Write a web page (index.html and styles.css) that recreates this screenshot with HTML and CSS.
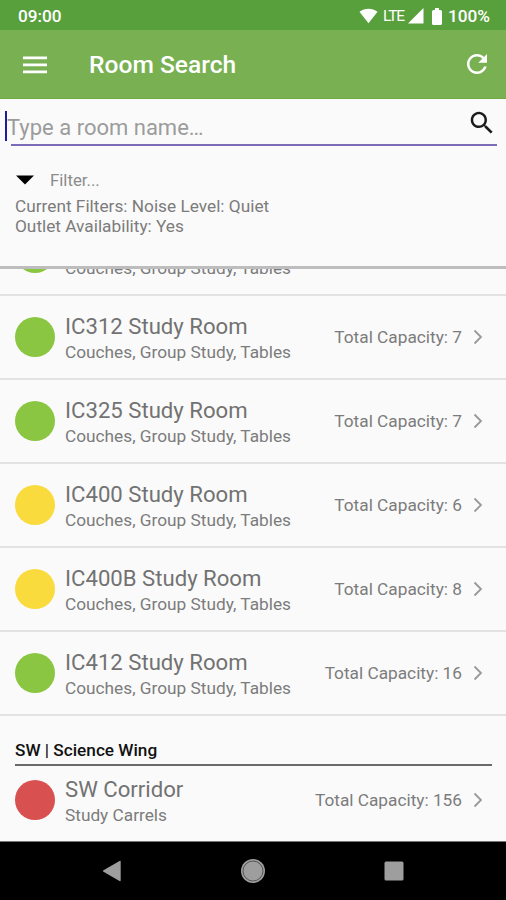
FILE: index.html
```html
<!DOCTYPE html>
<html lang="en">
<head>
<meta charset="utf-8">
<title>Room Search</title>
<link rel="stylesheet" href="styles.css">
</head>
<body>
<div class="screen">
  <div class="status">
    <span class="time">09:00</span>
    <svg class="wifi" width="19" height="16" viewBox="0 0 20 16"><path d="M0.5 3.6C6 -0.6 14 -0.6 19.5 3.6L10 15.5Z"/></svg>
    <span class="lte">LTE</span>
    <svg class="signal" width="16" height="16" viewBox="0 0 16 16"><path d="M0 15.5L15.5 0V15.5Z"/></svg>
    <svg class="battery" width="10" height="17" viewBox="0 0 10 17"><path d="M3 0H7V2H8.5Q10 2 10 3.5V15.5Q10 17 8.500 17H1.500Q0 17 0 15.500V3.500Q0 2 1.500 2H3Z"/></svg>
    <span class="percent">100%</span>
  </div>
  <header class="appbar">
    <svg class="menu" width="24" height="18" viewBox="0 0 24 18"><path d="M0 .5H24V3.200H0ZM0 7.500H24V10.200H0ZM0 14.500H24V17.200H0Z"/></svg>
    <h1>Room Search</h1>
    <svg class="refresh" width="30" height="30" viewBox="0 0 24 24"><path d="M17.650 6.350C16.200 4.900 14.210 4 12 4c-4.420 0-7.990 3.580-7.990 8s3.570 8 7.990 8c3.730 0 6.840-2.550 7.730-6h-2.080c-.82 2.330-3.040 4-5.650 4-3.310 0-6-2.690-6-6s2.690-6 6-6c1.660 0 3.140.69 4.220 1.780L13 11h7V4l-2.350 2.350z"/></svg>
  </header>
  <section class="panel">
    <div class="search">
      <span class="caret"></span>
      <span class="placeholder">Type a room name…</span>
      <svg class="glass" width="30" height="30" viewBox="0 0 24 24"><path d="M15.500 14h-.79l-.28-.27C15.410 12.590 16 11.110 16 9.500 16 5.910 13.090 3 9.500 3S3 5.910 3 9.500 5.910 16 9.500 16c1.610 0 3.090-.59 4.230-1.570l.27.28v.79l5 4.990L20.490 19l-4.990-5zm-6 0C7.010 14 5 11.990 5 9.500S7.010 5 9.500 5 14 7.010 14 9.500 11.990 14 9.500 14z"/></svg>
    </div>
    <div class="filter">
      <svg width="18" height="10" viewBox="0 0 18 10"><path d="M0 .5H18L9 9.500Z"/></svg>
      <span>Filter...</span>
    </div>
    <p class="current">Current Filters: Noise Level: Quiet<br>Outlet Availability: Yes</p>
  </section>
  <main class="list">
    <div class="row clipped"><i class="dot green"></i><div class="info"><div class="name">&nbsp;</div><div class="tags">Couches, Group Study, Tables</div></div></div>
    <div class="row"><i class="dot green"></i><div class="info"><div class="name">IC312 Study Room</div><div class="tags">Couches, Group Study, Tables</div></div><span class="cap">Total Capacity: 7</span><svg class="chev" width="10" height="16" viewBox="0 0 10 16"><path d="M1.500 1.500L8 8L1.500 14.500"/></svg></div>
    <div class="row"><i class="dot green"></i><div class="info"><div class="name">IC325 Study Room</div><div class="tags">Couches, Group Study, Tables</div></div><span class="cap">Total Capacity: 7</span><svg class="chev" width="10" height="16" viewBox="0 0 10 16"><path d="M1.500 1.500L8 8L1.500 14.500"/></svg></div>
    <div class="row"><i class="dot yellow"></i><div class="info"><div class="name">IC400 Study Room</div><div class="tags">Couches, Group Study, Tables</div></div><span class="cap">Total Capacity: 6</span><svg class="chev" width="10" height="16" viewBox="0 0 10 16"><path d="M1.500 1.500L8 8L1.500 14.500"/></svg></div>
    <div class="row"><i class="dot yellow"></i><div class="info"><div class="name">IC400B Study Room</div><div class="tags">Couches, Group Study, Tables</div></div><span class="cap">Total Capacity: 8</span><svg class="chev" width="10" height="16" viewBox="0 0 10 16"><path d="M1.500 1.500L8 8L1.500 14.500"/></svg></div>
    <div class="row"><i class="dot green"></i><div class="info"><div class="name">IC412 Study Room</div><div class="tags">Couches, Group Study, Tables</div></div><span class="cap">Total Capacity: 16</span><svg class="chev" width="10" height="16" viewBox="0 0 10 16"><path d="M1.500 1.500L8 8L1.500 14.500"/></svg></div>
    <h2 class="group">SW | Science Wing</h2>
    <div class="row last"><i class="dot red"></i><div class="info"><div class="name">SW Corridor</div><div class="tags">Study Carrels</div></div><span class="cap">Total Capacity: 156</span><svg class="chev" width="10" height="16" viewBox="0 0 10 16"><path d="M1.500 1.500L8 8L1.500 14.500"/></svg></div>
  </main>
  <nav class="navbar">
    <svg width="20" height="22" viewBox="0 0 20 22"><path d="M1.500 10.200L17.500 1Q18.700 .5 18.700 1.800V20.200Q18.700 21.500 17.500 21L1.500 11.800Q.2 11 1.500 10.200Z"/></svg>
    <svg width="24" height="24" viewBox="0 0 24 24"><circle cx="12" cy="12" r="12"/><circle class="ring" cx="12" cy="12" r="10"/></svg>
    <svg width="20" height="20" viewBox="0 0 20 20"><rect x=".5" y=".5" width="19" height="19" rx="1.500"/></svg>
  </nav>
</div>
</body>
</html>
```
FILE: styles.css
```css
* { box-sizing: border-box; }
body { margin: 0; font-family: Roboto, "Liberation Sans", sans-serif; color: #7c7c7c; background: #fafafa; }
svg { display: block; flex: none; }
.screen { width: 506px; height: 900px; display: flex; flex-direction: column; overflow: hidden; background: #fafafa; }
.status { height: 30px; flex: none; display: flex; align-items: center; padding: 2px 16px 0 18px; background: #57a03c; color: #fff; fill: #fff; font-size: 17.2px; font-weight: 500; }
.time { margin-right: auto; }
.lte { font-size: 15.5px; font-weight: 400; letter-spacing: -1.1px; margin: 0 4px 0 5px; }
.battery { margin: 0 6px 0 8px; }
.appbar { height: 69px; flex: none; display: flex; align-items: center; padding: 1px 14px 0 23px; background: #78b052; border-bottom: 1px solid #70a941; fill: #fff; }
.appbar h1 { margin: 0 auto 0 42px; font-size: 24.6px; font-weight: 500; color: #fff; }
.refresh { margin-top: -1px; }
.panel { height: 170px; flex: none; border-bottom: 3px solid #bdbdbd; }
.search { position: relative; height: 47px; display: flex; align-items: center; padding: 9px 9px 0 7px; font-size: 22px; color: #9c9c9c; }
.search::after { content: ""; position: absolute; left: 11px; right: 9px; bottom: 0; height: 2px; background: #7c6cb5; }
.caret { position: absolute; left: 5px; top: 12px; width: 2px; height: 30px; background: #1c1c9c; }
.glass { margin: -8px 0 0 auto; fill: #1c1c1c; }
.filter { display: flex; align-items: center; gap: 16px; height: 21px; margin: 23px 0 0 16px; font-size: 16.8px; color: #8c8c8c; }
.filter path { fill: #000; }
.current { margin: 6px 0 0 15px; font-size: 17.25px; line-height: 20px; }
.list { flex: 1; min-height: 0; overflow: hidden; border-bottom: 1px solid #777; }
.row { height: 84px; display: flex; align-items: center; padding: 0 23px 0 15px; border-bottom: 2px solid #e2e2e2; }
.clipped { margin-top: -57px; }
.dot { width: 40px; height: 40px; flex: none; border-radius: 50%; margin-right: 10px; }
.green { background: #8bc643; }
.yellow { background: #fadb3d; }
.red { background: #d85050; }
.info { flex: 1; padding-top: 2px; }
.name { font-size: 22.15px; line-height: 28px; color: #727272; }
.tags { font-size: 17.25px; line-height: 24px; }
.cap { font-size: 17.25px; margin-right: 11px; }
.chev { fill: none; stroke: #999; stroke-width: 1.8; }
.group { margin: 22px 14px 0 15px; height: 28px; font-size: 17.2px; line-height: 25px; font-weight: 500; color: #111; border-bottom: 2px solid #6a6a6a; }
.last { height: 67px; border-bottom: 0; }
.navbar { height: 58px; flex: none; display: flex; align-items: center; justify-content: space-between; padding: 0 102px 0 102px; background: #000; fill: #9e9e9e; }
.ring { fill: none; stroke: #555; stroke-width: 1; }
```
